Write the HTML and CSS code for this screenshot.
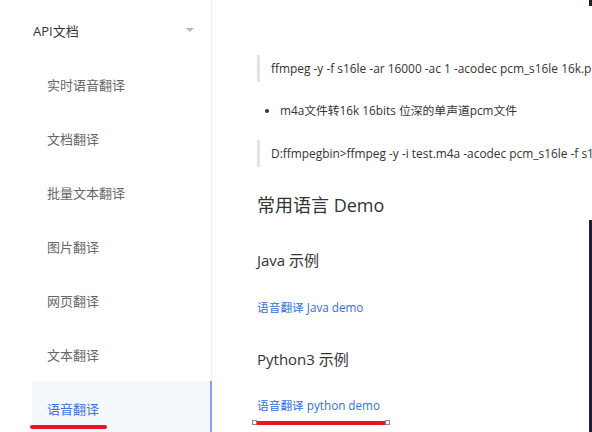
FILE: index.html
```html
<!DOCTYPE html>
<html lang="zh-CN">
<head>
<meta charset="utf-8">
<link rel="stylesheet" href="styles.css">
</head>
<body>
<div class="page">
  <aside class="sidebar">
    <div class="menu-head">
      <span>API文档</span>
      <span class="caret"></span>
    </div>
    <ul class="menu">
      <li class="menu-item">实时语音翻译</li>
      <li class="menu-item">文档翻译</li>
      <li class="menu-item">批量文本翻译</li>
      <li class="menu-item">图片翻译</li>
      <li class="menu-item">网页翻译</li>
      <li class="menu-item">文本翻译</li>
      <li class="menu-item active">语音翻译</li>
    </ul>
  </aside>
  <main class="content">
    <blockquote class="quote first">ffmpeg -y -f s16le -ar 16000 -ac 1 -acodec pcm_s16le 16k.p</blockquote>
    <ul class="bullets">
      <li>m4a文件转16k 16bits 位深的单声道pcm文件</li>
    </ul>
    <blockquote class="quote">D:ffmpegbin&gt;ffmpeg -y -i test.m4a -acodec pcm_s16le -f s1</blockquote>
    <h2 class="h2">常用语言 Demo</h2>
    <h3 class="h3 java">Java 示例</h3>
    <p class="link-line"><a class="link">语音翻译 Java demo</a></p>
    <h3 class="h3 py">Python3 示例</h3>
    <p class="link-line last"><a class="link">语音翻译 python demo</a></p>
  </main>
</div>
<div class="mark mark-side"></div>
<div class="mark-sel">
  <span class="handle"></span>
  <span class="bar"></span>
  <span class="handle"></span>
</div>
<div class="edge edge-top"></div>
<div class="edge edge-bottom"></div>
</body>
</html>
```

FILE: styles.css
```css
html, body {
  margin: 0;
  padding: 0;
  background: #fff;
  width: 592px;
  height: 432px;
  overflow: hidden;
}
body {
  font-family: "Open Sans", "Noto Sans CJK SC", sans-serif;
  color: #333;
  position: relative;
}
.page {
  display: flex;
  height: 432px;
}
.sidebar {
  width: 211px;
  flex: none;
  border-right: 1px solid #eff0f2;
  padding-top: 3px;
  box-sizing: content-box;
}
.menu-head {
  height: 54px;
  display: flex;
  align-items: center;
  justify-content: space-between;
  padding-left: 33px;
  padding-right: 17px;
  font-size: 13px;
  color: #333;
}
.caret {
  width: 0;
  height: 0;
  border-left: 4px solid transparent;
  border-right: 4px solid transparent;
  border-top: 4px solid #b8b8b8;
  margin-top: -1px;
}
.menu {
  list-style: none;
  margin: 0 0 0 32px;
  padding: 0;
}
.menu-item {
  height: 54px;
  display: flex;
  align-items: center;
  padding-left: 15px;
  font-size: 13px;
  color: #666;
}
.menu-item.active {
  background: #f5f8fd;
  color: #3f6fe6;
  border-right: 2px solid #84a3f3;
  margin-right: -1px;
}
.content {
  flex: 1;
  min-width: 0;
  padding: 55px 0 0 45px;
  font-size: 12px;
  color: #333;
  white-space: nowrap;
  overflow: hidden;
}
.quote {
  margin: 0;
  border-left: 3px solid #e1e3e8;
  padding-left: 11px;
  line-height: 27px;
  font-size: 11.9px;
}
.bullets {
  margin: 18px 0 0 0;
  padding-left: 23px;
  line-height: 20px;
  font-size: 11.8px;
}
.bullets + .quote {
  margin-top: 20px;
}
.h2 {
  margin: 23px 0 0 0;
  font-size: 18px;
  font-weight: normal;
  line-height: 30px;
  color: #333;
}
.h3 {
  margin: 0;
  font-size: 15px;
  font-weight: normal;
  line-height: 26px;
  color: #333;
}
.h3.java { margin-top: 27px; }
.h3.py { margin-top: 29px; }
.link-line {
  margin: 24px 0 0 0;
  line-height: 20px;
  font-size: 11.7px;
}
.link-line.last { margin-top: 23px; }
.link {
  color: #3570e0;
  text-decoration: none;
}
.mark-side {
  position: absolute;
  left: 30px;
  top: 425px;
  width: 77px;
  height: 4px;
  border-radius: 2px;
  background: #e8161f;
}
.mark-sel {
  position: absolute;
  left: 252px;
  top: 420px;
  width: 138px;
  height: 5px;
  display: flex;
  align-items: center;
}
.mark-sel .handle {
  width: 3px;
  height: 3px;
  border: 1px solid #888;
  background: #fff;
  flex: none;
}
.mark-sel .bar {
  flex: 1;
  height: 4px;
  background: #e8161f;
}
.edge {
  position: absolute;
  left: 589px;
  width: 3px;
  background: #1b1e3f;
}
.edge-top { top: 0; height: 6px; }
.edge-bottom { top: 220px; height: 212px; }
```
